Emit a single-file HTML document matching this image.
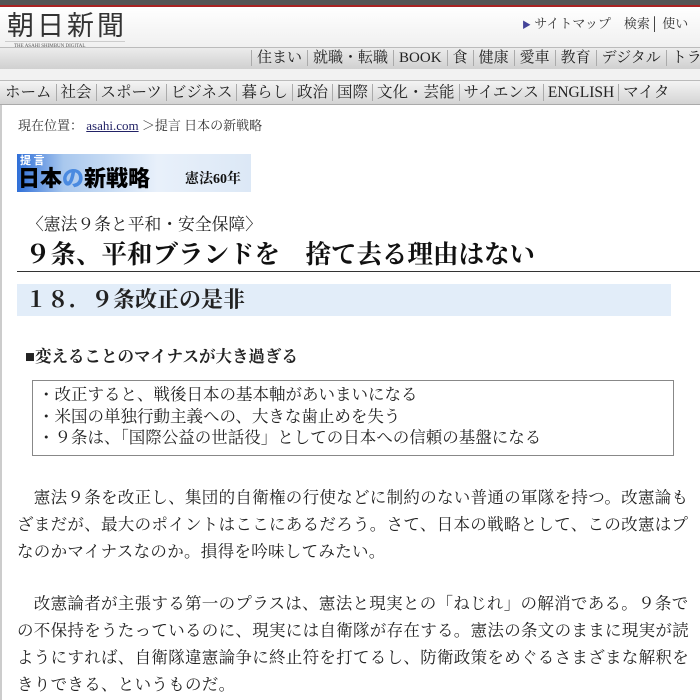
<!DOCTYPE html>
<html><head><meta charset="utf-8"><style>
body{margin:0;width:700px;height:700px;overflow:hidden;background:#fff;font-family:"Liberation Serif","Noto Serif CJK SC",serif;color:#222;position:relative}
.a{position:absolute;white-space:nowrap}
.top{position:absolute;left:0;top:0;width:700px;height:5px;background:#555;border-bottom:2px solid #a22}
.hdr{position:absolute;left:0;top:7px;width:700px;height:40px;background:linear-gradient(#fff,#f0f0f0)}
.nav1{position:absolute;left:0;top:47px;width:700px;height:21px;background:linear-gradient(#ececec,#d0d0d0);border-top:1px solid #bbb;border-bottom:1px solid #bbb;font-size:15px;line-height:21px}
.nav2{position:absolute;left:0;top:80px;width:700px;height:23px;background:linear-gradient(#f4f4f4,#d4d4d4);border-top:1px solid #bbb;border-bottom:1px solid #aaa;font-size:15.5px;line-height:23px}
.nav1 span{border-left:1px solid #aaa;padding:0 5px}
.nav2 span{border-left:1px solid #aaa;padding:0 4px}
.p{font-size:16.5px;letter-spacing:0.3px;line-height:27px;left:17px}
</style></head><body>
<div style="position:absolute;left:0;top:0;width:2px;height:700px;background:#ccc"></div>
<div class="top"></div>
<div class="hdr"></div>
<div class="a" style="left:7px;top:6px;font-size:27px;font-family:'Noto Sans CJK JP',sans-serif;color:#333;letter-spacing:3px;line-height:36px">朝日新聞</div>
<div style="position:absolute;left:5px;top:41px;width:120px;height:1px;background:#ccc"></div>
<div class="a" style="left:14px;top:44px;font-size:5px;color:#555">THE ASAHI SHIMBUN DIGITAL</div>
<div class="a" style="left:522px;top:13px;font-size:13px;color:#333"><span style="color:#449;font-size:9px">▶</span> サイトマップ　検索│ 使い</div>
<div class="nav1"><div class="a" style="left:251px;top:0"><span>住まい</span><span>就職・転職</span><span>BOOK</span><span>食</span><span>健康</span><span>愛車</span><span>教育</span><span>デジタル</span><span>トラ</span></div></div>
<div style="position:absolute;left:0;top:69px;width:700px;height:11px;background:#f2f2f2"></div>
<div class="nav2"><div class="a" style="left:5px;top:0">ホーム<span style="border:0;padding:0 2px"></span><span>社会</span><span>スポーツ</span><span>ビジネス</span><span>暮らし</span><span>政治</span><span>国際</span><span>文化・芸能</span><span>サイエンス</span><span>ENGLISH</span><span>マイタ</span></div></div>
<div class="a" style="left:18px;top:115px;font-size:13px;color:#333">現在位置： <u style="color:#226">asahi.com</u> ＞提言 日本の新戦略</div>
<div style="position:absolute;left:17px;top:154px;width:234px;height:38px;background:linear-gradient(90deg,#2f6fd8 0,#a9c8ee 20%,#e8f0fa 60%,#dce8f6)"></div>
<div class="a" style="left:20px;top:152px;font-size:11px;color:#fff;font-weight:bold;font-family:'Noto Sans CJK JP',sans-serif">提 言</div>
<div class="a" style="left:18px;top:163px;font-size:22px;font-weight:900;font-family:'Noto Sans CJK JP',sans-serif;line-height:28px;color:#000">日本<span style="color:#4a8ae0">の</span>新戦略</div>
<div class="a" style="left:185px;top:168px;font-size:14px;font-weight:bold;color:#111">憲法60年</div>
<div class="a" style="left:27px;top:211px;font-size:16.8px">〈憲法９条と平和・安全保障〉</div>
<div class="a" style="left:25px;top:235px;font-size:25.5px;font-weight:bold;color:#111">９条、平和ブランドを　捨て去る理由はない</div>
<div style="position:absolute;left:17px;top:271px;width:683px;height:1px;background:#333"></div>
<div style="position:absolute;left:17px;top:284px;width:654px;height:32px;background:#e2edf9"></div>
<div class="a" style="left:25px;top:285px;font-size:22px;font-weight:bold;line-height:30px">１８．９条改正の是非</div>
<div class="a" style="left:25px;top:343px;font-size:16.5px;font-weight:bold">■変えることのマイナスが大き過ぎる</div>
<div style="position:absolute;left:32px;top:380px;width:640px;height:74px;border:1px solid #888"></div>
<div class="a" style="left:38px;top:384px;font-size:16.5px;line-height:21.5px">・改正すると、戦後日本の基本軸があいまいになる<br>・米国の単独行動主義への、大きな歯止めを失う<br>・９条は、「国際公益の世話役」としての日本への信頼の基盤になる</div>
<div class="a p" style="top:484px">　憲法９条を改正し、集団的自衛権の行使などに制約のない普通の軍隊を持つ。改憲論も<br>ざまだが、最大のポイントはここにあるだろう。さて、日本の戦略として、この改憲はプ<br>なのかマイナスなのか。損得を吟味してみたい。</div>
<div class="a p" style="top:590px">　改憲論者が主張する第一のプラスは、憲法と現実との「ねじれ」の解消である。９条で<br>の不保持をうたっているのに、現実には自衛隊が存在する。憲法の条文のままに現実が読<br>ようにすれば、自衛隊違憲論争に終止符を打てるし、防衛政策をめぐるさまざまな解釈を<br>きりできる、というものだ。</div>
</body></html>
